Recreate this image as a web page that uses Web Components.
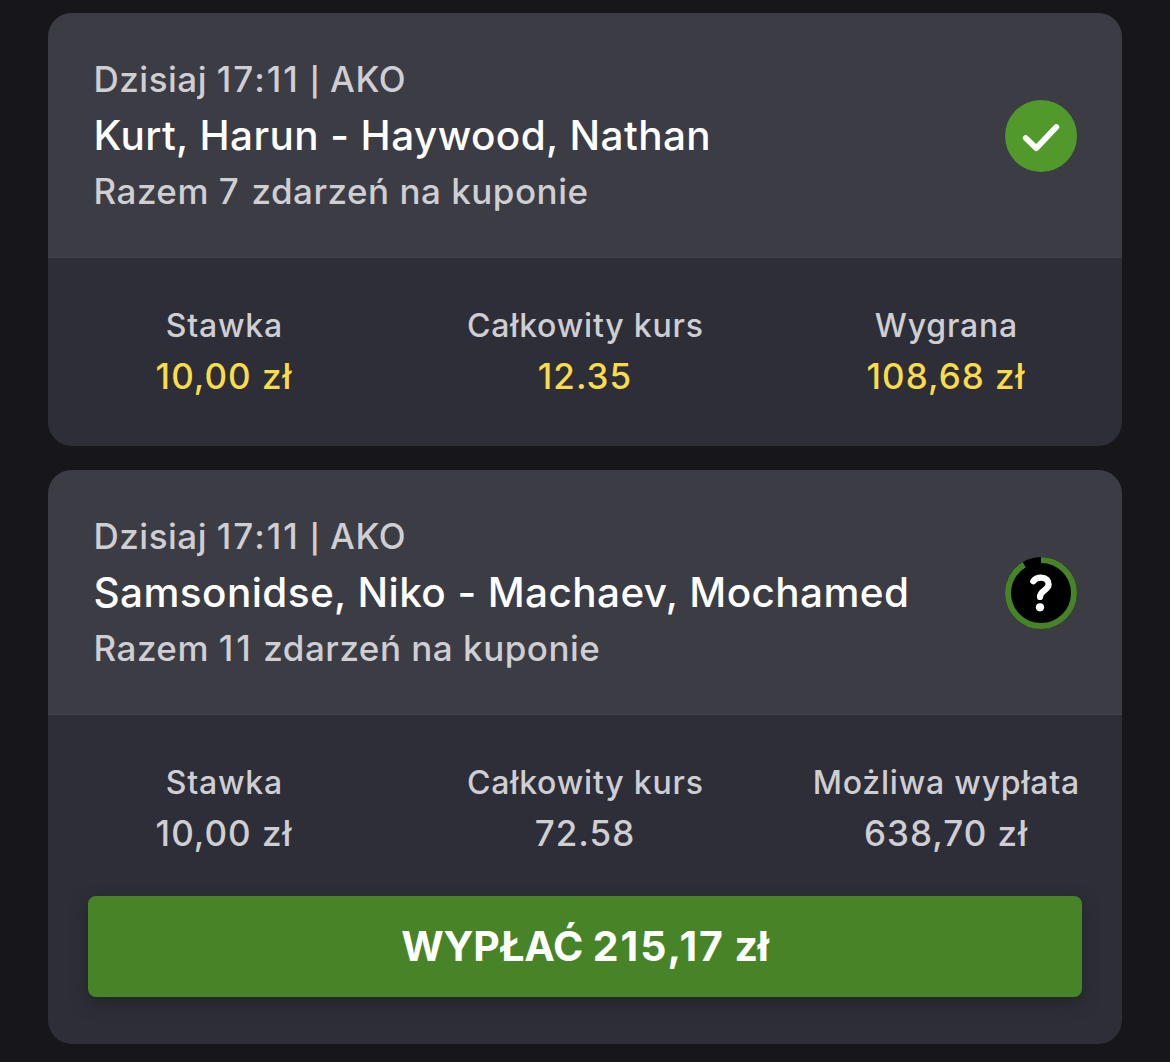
<!DOCTYPE html>
<html lang="pl">
<head>
<meta charset="utf-8">
<title>Kupony</title>
<style>
  body {
    margin: 0;
    padding: 13px 48px 0;
    height: 1049px;
    background-color: #17161b;
    font-family: Inter, "Liberation Sans", sans-serif;
    color: #cfced3;
    display: flex;
    flex-direction: column;
    gap: 24px;
    overflow: hidden;
  }
</style>
</head>
<body>
  <bet-coupon>
    <coupon-header slot="header" date="Dzisiaj 17:11 | AKO" name="Kurt, Harun - Haywood, Nathan" total="Razem 7 zdarzeń na kuponie">
      <status-icon status="won"></status-icon>
    </coupon-header>
    <coupon-stat class="won" label="Stawka" value="10,00 zł"></coupon-stat>
    <coupon-stat class="won" label="Całkowity kurs" value="12.35"></coupon-stat>
    <coupon-stat class="won" label="Wygrana" value="108,68 zł"></coupon-stat>
  </bet-coupon>

  <bet-coupon>
    <coupon-header slot="header" date="Dzisiaj 17:11 | AKO" name="Samsonidse, Niko - Machaev, Mochamed" total="Razem 11 zdarzeń na kuponie">
      <status-icon status="open"></status-icon>
    </coupon-header>
    <coupon-stat label="Stawka" value="10,00 zł"></coupon-stat>
    <coupon-stat label="Całkowity kurs" value="72.58"></coupon-stat>
    <coupon-stat label="Możliwa wypłata" value="638,70 zł"></coupon-stat>
    <cashout-button slot="footer" text="WYPŁAĆ 215,17 zł"></cashout-button>
  </bet-coupon>

<script>
// digits get looser spacing, the separator bar is drawn shorter
function formatText(text) {
  return text
    .replace(/[\d:,]+/g, '<span class="num">$&</span>')
    .replace('|', '<span class="bar">|</span>');
}

class BetCoupon extends HTMLElement {
  constructor() {
    super();
    this.attachShadow({ mode: 'open' });
  }

  connectedCallback() {
    this.shadowRoot.innerHTML = `
    <style>
      :host {
        display: block;
        border-radius: 24px;
        background-color: #2e2e38;
        overflow: hidden;
      }
      .stats {
        display: grid;
        grid-template-columns: repeat(3, 270px);
        column-gap: 91px;
        justify-content: center;
        padding: 42px 0 44px;
      }
      slot[name="footer"]::slotted(*) {
        margin: -7.5px 40.5px 47px 40.4px;
      }
    </style>
    <slot name="header"></slot>
    <div class="stats"><slot></slot></div>
    <slot name="footer"></slot>
    `;
  }
}

class CouponHeader extends HTMLElement {
  constructor() {
    super();
    this.attachShadow({ mode: 'open' });
  }

  connectedCallback() {
    this.shadowRoot.innerHTML = `
    <style>
      :host {
        display: flex;
        justify-content: space-between;
        align-items: center;
        box-sizing: border-box;
        height: 245px;
        padding: 0 45px 0 45.5px;
        background-color: #3c3c44;
        border-bottom: 1px solid #42424b;
      }
      .info {
        align-self: flex-start;
        padding-top: 38px;
      }
      p, h2 {
        margin: 0;
        line-height: 56px;
        font-size: 35px;
        font-weight: 450;
        letter-spacing: 0.5px;
        white-space: nowrap;
      }
      h2 {
        font-size: 40.5px;
        line-height: 57px;
        font-weight: 500;
        letter-spacing: 0.4px;
        color: #fff;
      }
      .total {
        line-height: 54px;
      }
      .num {
        letter-spacing: 2px;
      }
      .total .num {
        letter-spacing: 2.8px;
      }
      .bar {
        display: inline-block;
        font-size: 28px;
        line-height: 1;
        font-weight: 600;
      }
      ::slotted(status-icon) {
        margin-top: 2px;
      }
    </style>
    <div class="info">
      <p class="date">${formatText(this.getAttribute('date'))}</p>
      <h2>${this.getAttribute('name')}</h2>
      <p class="total">${formatText(this.getAttribute('total'))}</p>
    </div>
    <slot></slot>
    `;
  }
}

class StatusIcon extends HTMLElement {
  constructor() {
    super();
    this.attachShadow({ mode: 'open' });
  }

  connectedCallback() {
    const won = `
      <circle cx="36" cy="36" r="36" fill="#52992c"/>
      <path d="M20.7 38 L31.2 48.2 L51.3 27" fill="none" stroke="#fff" stroke-width="5.8" stroke-linecap="round" stroke-linejoin="round"/>`;
    // ring starts at 12 o'clock and runs clockwise, about 91% full
    const open = `
      <circle cx="36" cy="36" r="36" fill="#000"/>
      <circle cx="36" cy="36" r="33" fill="none" stroke="#478427" stroke-width="6" pathLength="100" stroke-dasharray="91.5 100" transform="rotate(-90 36 36)"/>
      <path d="M28.3 24.3 C30 21.8 33 20.7 36 20.7 C41 20.7 43.6 23.5 43.6 27.3 C43.6 33.5 35 33 35 40" fill="none" stroke="#fff" stroke-width="6.2" stroke-linecap="round" stroke-linejoin="round"/>
      <circle cx="35" cy="50.3" r="4.1" fill="#fff"/>`;

    this.shadowRoot.innerHTML = `
    <style>
      :host {
        display: block;
        width: 72px;
        height: 72px;
      }
      svg {
        display: block;
      }
    </style>
    <svg width="72" height="72" viewBox="0 0 72 72">${this.getAttribute('status') === 'won' ? won : open}</svg>
    `;
  }
}

class CouponStat extends HTMLElement {
  constructor() {
    super();
    this.attachShadow({ mode: 'open' });
  }

  connectedCallback() {
    this.shadowRoot.innerHTML = `
    <style>
      :host {
        display: block;
        text-align: center;
        white-space: nowrap;
      }
      .label {
        font-size: 32px;
        line-height: 51px;
        font-weight: 450;
        letter-spacing: 0.8px;
        text-indent: 0.8px;
      }
      .value {
        font-size: 35px;
        line-height: 51px;
        font-weight: 450;
        letter-spacing: 1px;
      }
      :host(.won) .value {
        color: #f9dc4b;
      }
    </style>
    <div class="label">${this.getAttribute('label')}</div>
    <div class="value">${this.getAttribute('value')}</div>
    `;
  }
}

class CashoutButton extends HTMLElement {
  constructor() {
    super();
    this.attachShadow({ mode: 'open' });
  }

  connectedCallback() {
    this.shadowRoot.innerHTML = `
    <style>
      :host {
        display: block;
      }
      button {
        display: block;
        width: 100%;
        height: 101.5px;
        padding: 0;
        border: none;
        border-radius: 8px;
        background-color: #478427;
        box-shadow: 0 6px 16px rgba(24, 30, 24, 0.5);
        color: #fff;
        font-family: inherit;
        font-size: 41px;
        font-weight: 670;
        letter-spacing: -0.2px;
      }
      .num {
        letter-spacing: 2px;
      }
    </style>
    <button type="button">${formatText(this.getAttribute('text'))}</button>
    `;
  }
}

customElements.define('bet-coupon', BetCoupon);
customElements.define('coupon-header', CouponHeader);
customElements.define('status-icon', StatusIcon);
customElements.define('coupon-stat', CouponStat);
customElements.define('cashout-button', CashoutButton);
</script>
</body>
</html>
